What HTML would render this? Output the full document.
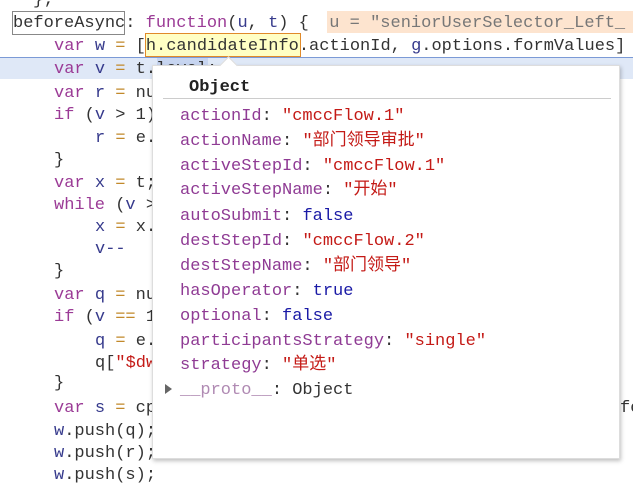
<html><head><style>
body{margin:0;width:633px;height:477px;background:#fff;overflow:hidden;position:relative;font-family:"Liberation Mono","Noto Sans CJK SC",monospace;font-size:17px;color:#333}
.l{position:absolute;white-space:pre;line-height:22px;margin-top:2px}
.k{color:#9b3b96}.i{color:#363a8c}.o{color:#c2892b}.n{color:#363a8c}.s{color:#c41a16}
.pk{color:#8f3b94}.b{color:#1a1aa6}
</style></head><body>
<div style="position:absolute;left:0;top:57px;width:633px;height:21px;background:#dfe8f7;border-top:1px solid #7b9ad6;"></div>
<div style="position:absolute;left:327px;top:11px;width:306px;height:22px;background:#fde4cf"></div>
<div style="position:absolute;left:12px;top:11px;width:111px;height:22px;border:1px solid #888"></div>
<div style="position:absolute;left:145px;top:33px;width:154px;height:22px;background:#ffffc4;border:1px solid #e08a2a"></div>
<div style="position:absolute;left:157px;top:58px;width:51px;height:19px;background:#c7d5f0"></div>
<div class="l" style="left:33px;top:-12px">};</div>
<div class="l" style="left:13px;top:11px">beforeAsync: <span class="k">function</span>(<span class="i">u</span>, <span class="i">t</span>) {  <span style="color:#777">u = "seniorUserSelector_Left_</span></div>
<div class="l" style="left:54px;top:34px"><span class="k">var</span> <span class="i">w</span> <span class="o">=</span> [h.candidateInfo.actionId, <span class="i">g</span>.options.formValues]</div>
<div class="l" style="left:54px;top:57px"><span class="k">var</span> <span class="i">v</span> <span class="o">=</span> t.level;</div>
<div class="l" style="left:54px;top:81px"><span class="k">var</span> <span class="i">r</span> <span class="o">=</span> nu</div>
<div class="l" style="left:54px;top:103px"><span class="k">if</span> (<span class="i">v</span> &gt; 1)</div>
<div class="l" style="left:95px;top:126px"><span class="i">r</span> <span class="o">=</span> e.</div>
<div class="l" style="left:54px;top:148px">}</div>
<div class="l" style="left:54px;top:171px"><span class="k">var</span> <span class="i">x</span> <span class="o">=</span> t;</div>
<div class="l" style="left:54px;top:193px"><span class="k">while</span> (<span class="i">v</span> &gt;</div>
<div class="l" style="left:95px;top:215px"><span class="i">x</span> <span class="o">=</span> x.</div>
<div class="l" style="left:95px;top:237px"><span class="i">v--</span></div>
<div class="l" style="left:54px;top:259px">}</div>
<div class="l" style="left:54px;top:283px"><span class="k">var</span> <span class="i">q</span> <span class="o">=</span> nu</div>
<div class="l" style="left:54px;top:305px"><span class="k">if</span> (<span class="i">v</span> <span class="o">==</span> 1</div>
<div class="l" style="left:95px;top:329px"><span class="i">q</span> <span class="o">=</span> e.</div>
<div class="l" style="left:95px;top:351px">q[<span class="s">"$dw</span></div>
<div class="l" style="left:54px;top:371px">}</div>
<div class="l" style="left:54px;top:396px"><span class="k">var</span> <span class="i">s</span> <span class="o">=</span> cp</div>
<div class="l" style="left:54px;top:419px"><span class="i">w</span>.push(q);</div>
<div class="l" style="left:54px;top:441px"><span class="i">w</span>.push(r);</div>
<div class="l" style="left:54px;top:463px"><span class="i">w</span>.push(s);</div>
<div class="l" style="left:620px;top:396px">fo</div>
<div style="position:absolute;left:152px;top:65px;width:466px;height:392px;background:#fff;border:1px solid #ddd;box-shadow:1px 2px 4px rgba(0,0,0,.25)"></div>
<div style="position:absolute;left:222px;top:59px;width:12px;height:12px;background:#fff;transform:rotate(45deg);border-left:1px solid #ddd;border-top:1px solid #ddd"></div>
<div class="l" style="left:189px;top:75px;font-weight:bold;color:#222">Object</div>
<div style="position:absolute;left:163px;top:98px;width:448px;height:1px;background:#ccc"></div>
<div class="l" style="left:180px;top:104px"><span class="pk">actionId</span>: <span class="s">"cmccFlow.1"</span></div>
<div class="l" style="left:180px;top:129px"><span class="pk">actionName</span>: <span class="s">"部门领导审批"</span></div>
<div class="l" style="left:180px;top:154px"><span class="pk">activeStepId</span>: <span class="s">"cmccFlow.1"</span></div>
<div class="l" style="left:180px;top:178px"><span class="pk">activeStepName</span>: <span class="s">"开始"</span></div>
<div class="l" style="left:180px;top:204px"><span class="pk">autoSubmit</span>: <span class="b">false</span></div>
<div class="l" style="left:180px;top:229px"><span class="pk">destStepId</span>: <span class="s">"cmccFlow.2"</span></div>
<div class="l" style="left:180px;top:254px"><span class="pk">destStepName</span>: <span class="s">"部门领导"</span></div>
<div class="l" style="left:180px;top:279px"><span class="pk">hasOperator</span>: <span class="b">true</span></div>
<div class="l" style="left:180px;top:304px"><span class="pk">optional</span>: <span class="b">false</span></div>
<div class="l" style="left:180px;top:329px"><span class="pk">participantsStrategy</span>: <span class="s">"single"</span></div>
<div class="l" style="left:180px;top:353px"><span class="pk">strategy</span>: <span class="s">"单选"</span></div>
<div class="l" style="left:180px;top:378px"><span style="color:#b08ab3">__proto__</span>: Object</div>
<div style="position:absolute;left:165px;top:384px;width:0;height:0;border-left:7px solid #666;border-top:5px solid transparent;border-bottom:5px solid transparent"></div>
</body></html>
